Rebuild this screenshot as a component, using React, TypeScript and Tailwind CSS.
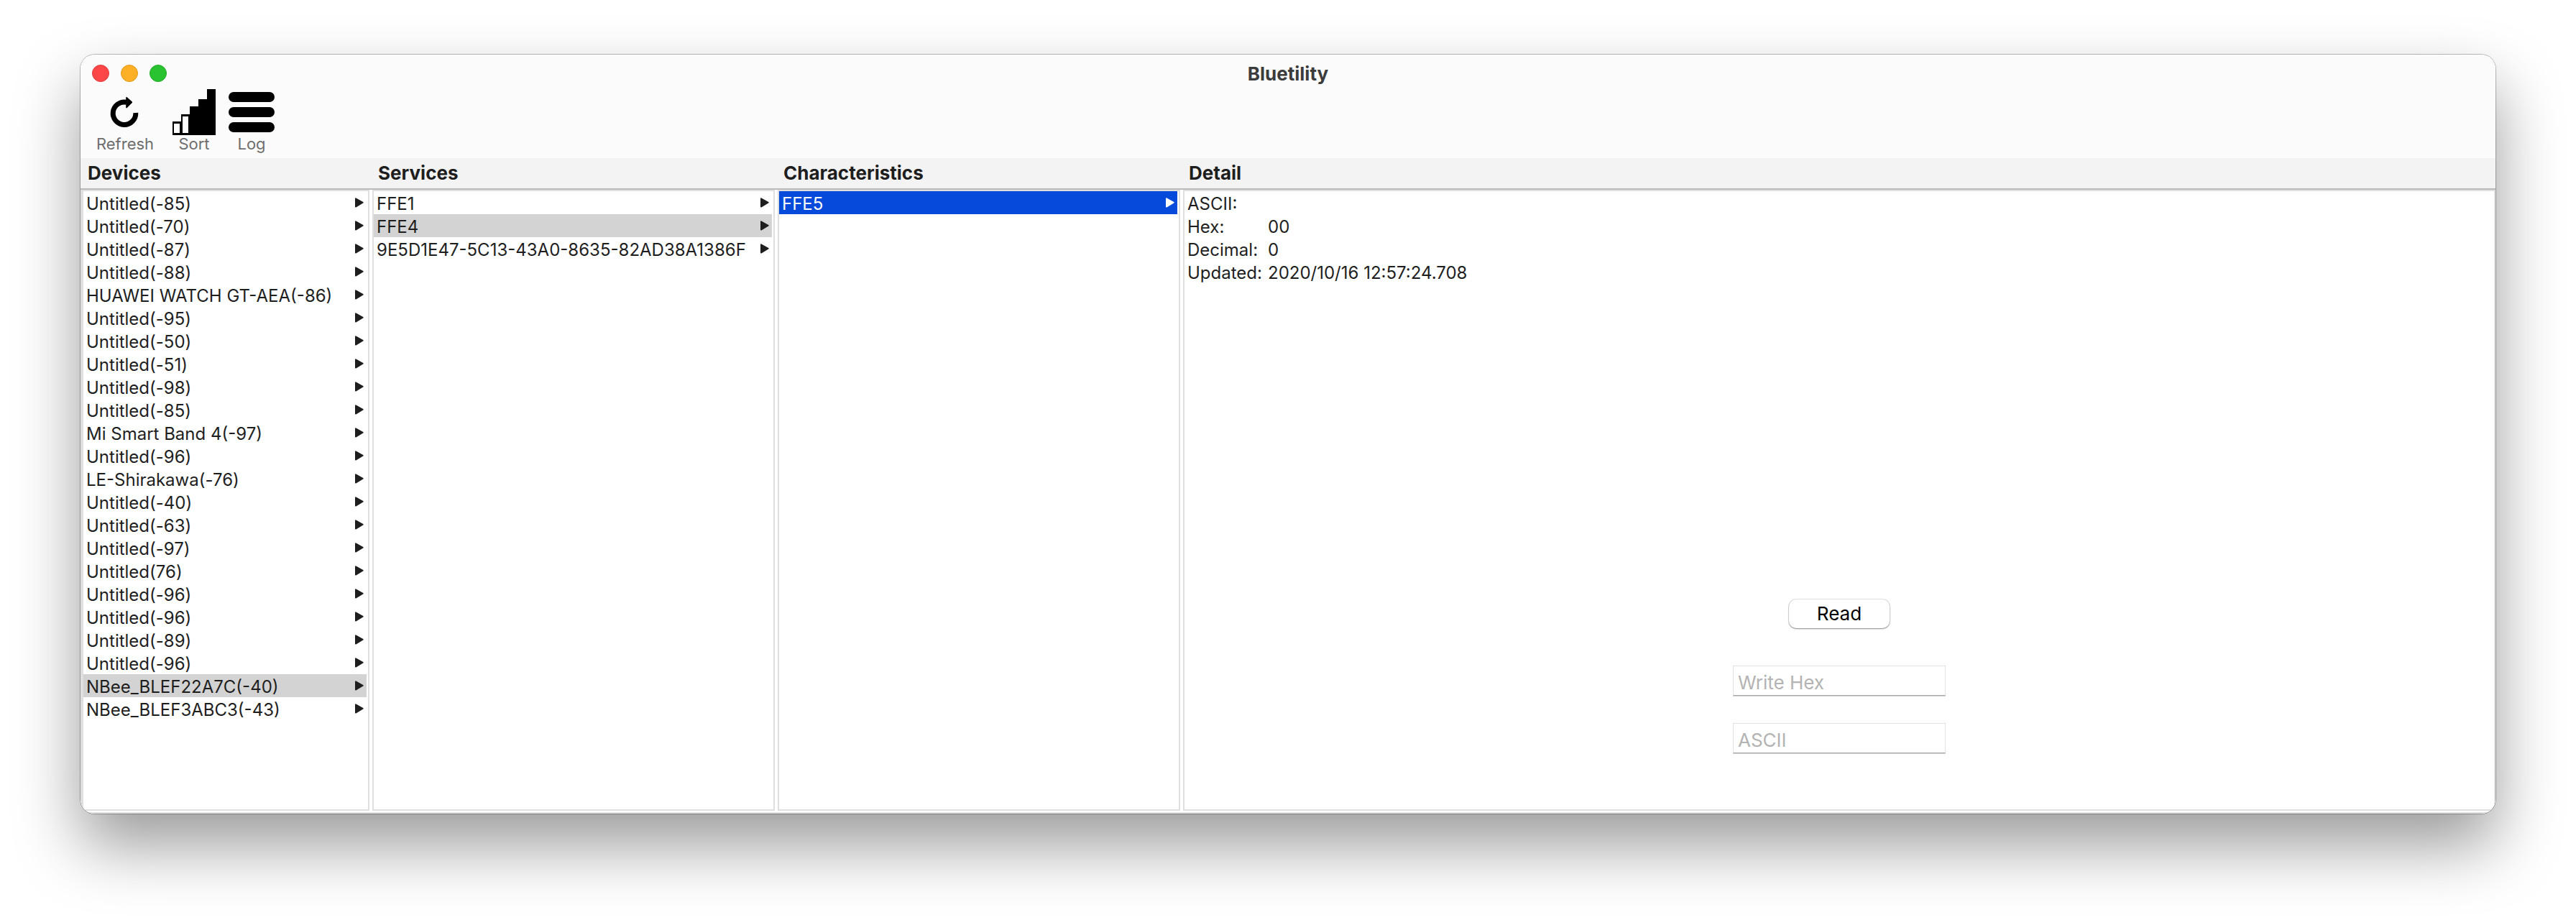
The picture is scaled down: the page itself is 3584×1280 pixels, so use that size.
import { useState } from 'react';

const DEVICES = [
  'Untitled(-85)',
  'Untitled(-70)',
  'Untitled(-87)',
  'Untitled(-88)',
  'HUAWEI WATCH GT-AEA(-86)',
  'Untitled(-95)',
  'Untitled(-50)',
  'Untitled(-51)',
  'Untitled(-98)',
  'Untitled(-85)',
  'Mi Smart Band 4(-97)',
  'Untitled(-96)',
  'LE-Shirakawa(-76)',
  'Untitled(-40)',
  'Untitled(-63)',
  'Untitled(-97)',
  'Untitled(76)',
  'Untitled(-96)',
  'Untitled(-96)',
  'Untitled(-89)',
  'Untitled(-96)',
  'NBee_BLEF22A7C(-40)',
  'NBee_BLEF3ABC3(-43)'
];

const SERVICES = ['FFE1', 'FFE4', '9E5D1E47-5C13-43A0-8635-82AD38A1386F'];

const CHARACTERISTICS = ['FFE5'];

const DETAILS = [
  { label: 'ASCII:', value: '' },
  { label: 'Hex:', value: '00' },
  { label: 'Decimal:', value: '0' },
  { label: 'Updated:', value: '2020/10/16 12:57:24.708' }
];

const COLUMNS = 'grid grid-cols-[400px_560px_560px_1fr] gap-1';

const INPUT =
  'w-[296px] h-[42px] px-1.5 pt-1 text-[26px] text-[#1e1e1e] placeholder:text-[#b3b3b3] bg-white border border-[#e2e2e2] border-b-[#a8a8a8] shadow-[0_1px_0_#cfcfcf] outline-none';

function RefreshIcon() {
  return (
    <svg viewBox="0 0 64 64" className="size-16" aria-hidden="true">
      <path d="M46.8 33A15.8 15.8 0 1 1 34 18.2" fill="none" stroke="#000" strokeWidth="7" />
      <path d="M33.2 11.5q.6-1 1.6-.2l7 6.2q.7.8 0 1.5l-7 7q-1 .7-1.6-.3z" fill="#000" />
    </svg>
  );
}

function SortIcon() {
  return (
    <svg viewBox="0 0 64 64" className="size-16" shapeRendering="crispEdges" aria-hidden="true">
      <path d="M2 64V45H14V35H26V24H38V14H50V0H62V64z" fill="#000" />
      <path d="M4 48h8v13H4zM16 38h8v23h-8z" fill="#fff" />
    </svg>
  );
}

function LogIcon() {
  return (
    <svg viewBox="0 0 64 64" className="size-16" fill="#000" aria-hidden="true">
      <rect y="4" width="64" height="14" rx="7" />
      <rect y="25" width="64" height="14" rx="7" />
      <rect y="46" width="64" height="14" rx="7" />
    </svg>
  );
}

interface BrowserColumnProps {
  label: string;
  items: string[];
  selected: number;
  active?: boolean;
  onSelect: (index: number) => void;
}

function BrowserColumn({ label, items, selected, active, onSelect }: BrowserColumnProps) {
  return (
    <ul aria-label={label} className="border-2 border-[#dfdfdf] bg-white pr-0.5">
      {items.map((item, i) => {
        const highlight = active ? 'bg-[#064adb] text-white' : 'bg-[#d3d3d3]';
        return (
          <li key={i}>
            <button
              onClick={() => onSelect(i)}
              className={`flex w-full h-8 items-center justify-between px-1 text-left whitespace-nowrap ${
                selected === i ? highlight : ''
              }`}
            >
              <span className="pt-1">{item}</span>
              <svg viewBox="0 0 12 14" className="w-3 h-3.5" fill="currentColor" aria-hidden="true">
                <path d="M0 1.4Q0 0 1.4.5L11.2 6q1.2.8 0 1.6L1.4 13.4Q0 14 0 12.6z" />
              </svg>
            </button>
          </li>
        );
      })}
    </ul>
  );
}

export default function App() {
  const [device, setDevice] = useState(21);
  const [service, setService] = useState(1);
  const [characteristic, setCharacteristic] = useState(0);
  const [hex, setHex] = useState('');
  const [ascii, setAscii] = useState('');

  return (
    <div className="min-h-screen flex flex-col bg-white px-28 pt-19 pb-37 font-['Inter',sans-serif] text-[#1e1e1e]">
      <div className="flex-1 flex flex-col rounded-[20px] overflow-hidden shadow-[0_0_0_1px_rgba(0,0,0,0.25),0_44px_90px_rgba(0,0,0,0.4)]">
        {/* Title bar and toolbar */}
        <header className="bg-[#fbfbfb] pb-2">
          <div className="grid grid-cols-[1fr_auto_1fr] items-center h-12 pt-1 px-4">
            <div className="flex gap-4">
              <button aria-label="Close" className="size-6 rounded-full bg-[#fc4647] border border-[#e0383c]" />
              <button aria-label="Minimize" className="size-6 rounded-full bg-[#fdb025] border border-[#e09a1c]" />
              <button aria-label="Zoom" className="size-6 rounded-full bg-[#29c231] border border-[#20a828]" />
            </div>
            <h1 className="pt-0.5 text-[26px] leading-8 font-bold text-[#3c3c3c]">Bluetility</h1>
          </div>
          <div className="flex gap-4 px-3.5 text-[22px] leading-6 text-[#6e6e6e]">
            <button className="w-24 flex flex-col items-center">
              <RefreshIcon />
              Refresh
            </button>
            <button className="w-16 flex flex-col items-center">
              <SortIcon />
              Sort
            </button>
            <button className="w-16 flex flex-col items-center">
              <LogIcon />
              Log
            </button>
          </div>
        </header>

        {/* Column headings */}
        <div className={`${COLUMNS} pl-0.5 bg-[#f3f3f3] border-b-2 border-[#b9b9b9] text-[26px] leading-[42px] font-bold`}>
          <h2 className="pl-2">Devices</h2>
          <h2 className="pl-2">Services</h2>
          <h2 className="pl-2">Characteristics</h2>
          <h2 className="pl-2">Detail</h2>
        </div>

        <main
          className={`${COLUMNS} flex-1 pb-0.5 bg-white border-l-2 border-b-2 border-[#dfdfdf] text-2xl leading-8`}
        >
          <BrowserColumn label="Devices" items={DEVICES} selected={device} onSelect={setDevice} />
          <BrowserColumn label="Services" items={SERVICES} selected={service} onSelect={setService} />
          <BrowserColumn
            label="Characteristics"
            items={CHARACTERISTICS}
            selected={characteristic}
            active
            onSelect={setCharacteristic}
          />

          <section className="flex flex-col border-2 border-[#dfdfdf]">
            <dl className="grid grid-cols-[112px_1fr] pl-1 pt-0.5">
              {DETAILS.map((row) => (
                <div key={row.label} className="contents">
                  <dt>{row.label}</dt>
                  <dd>{row.value}</dd>
                </div>
              ))}
            </dl>

            <form className="mt-auto flex flex-col items-center pb-[78px]" onSubmit={(e) => e.preventDefault()}>
              <button
                type="button"
                className="w-[140px] h-10 mb-13 rounded-[10px] bg-white text-[26px] leading-10 text-black shadow-[0_0_0_1px_rgba(0,0,0,0.1),0_1px_2px_rgba(0,0,0,0.4)]"
              >
                Read
              </button>
              <input
                aria-label="Write Hex"
                placeholder="Write Hex"
                value={hex}
                onChange={(e) => setHex(e.target.value)}
                className={`${INPUT} mb-[38px]`}
              />
              <input
                aria-label="ASCII"
                placeholder="ASCII"
                value={ascii}
                onChange={(e) => setAscii(e.target.value)}
                className={INPUT}
              />
            </form>
          </section>
        </main>
      </div>
    </div>
  );
}
